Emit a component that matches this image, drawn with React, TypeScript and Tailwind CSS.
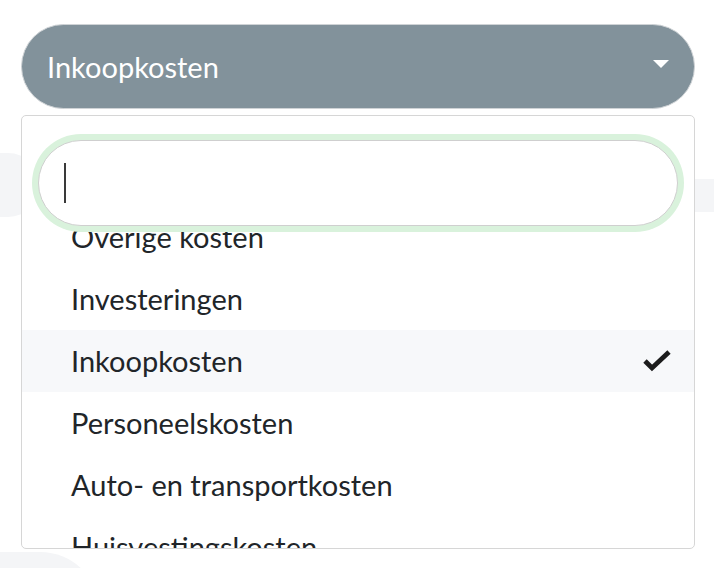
import { useState } from "react";

const options = [
  "Overige kosten",
  "Investeringen",
  "Inkoopkosten",
  "Personeelskosten",
  "Auto- en transportkosten",
  "Huisvestingskosten",
];

/** Select dropdown, opened, with a search field over the option list. */
export default function App() {
  const [selected] = useState("Inkoopkosten");

  return (
    <div
      className="relative h-[568px] w-[714px] overflow-hidden bg-white"
      style={{ fontFamily: "Lato, 'Open Sans', sans-serif" }}
    >
      {/* faint shapes of the page behind the dropdown */}
      <div className="absolute left-[-40px] top-[153px] h-[64px] w-[80px] rounded-[32px] bg-[#f4f5f7]" />
      <div className="absolute right-0 top-[179px] h-[33px] w-[40px] bg-[#f4f5f7]" />
      <div className="absolute left-[-60px] top-[552px] h-[120px] w-[160px] rounded-full bg-[#f4f5f7]" />

      <div className="relative ml-[21px] w-[674px] pt-[24px]">
        <button className="flex h-[85px] w-full items-center justify-between rounded-full border border-[#cfd3d6] bg-[#82929b] pl-[25px] pr-[25px] text-left">
          <span className="text-[29px] leading-none text-white">{selected}</span>
          <svg width="16" height="8" viewBox="0 0 16 8" className="-mt-[5px]">
            <polygon points="0,0 16,0 8,8" fill="#ffffff" />
          </svg>
        </button>

        <div className="relative mt-[6px] h-[434px] overflow-hidden rounded-[5px] border border-[#d6d6d6] bg-white">
          <ul className="pt-[90px]">
            {options.map((opt) => (
              <li
                key={opt}
                className={
                  "flex h-[62px] items-center justify-between pl-[49px] pr-[22px] text-[29px] text-[#212529] " +
                  (opt === selected ? "bg-[#f7f8fa]" : "")
                }
              >
                <span>{opt}</span>
                {opt === selected && (
                  <svg width="30" height="24" viewBox="0 0 30 24">
                    <polyline
                      points="3,12 10,19 27,3"
                      fill="none"
                      stroke="#1c1c1c"
                      strokeWidth="4.8"
                      strokeLinejoin="miter"
                    />
                  </svg>
                )}
              </li>
            ))}
          </ul>

          <div className="absolute left-[16px] right-[16px] top-[24px] flex h-[86px] items-center rounded-full border-[1.5px] border-[#cfcfcf] bg-white pl-[25px] shadow-[0_0_0_6px_#d9f2dc]">
            <span className="h-[40px] w-[2px] bg-[#3a3a3a]" />
          </div>
        </div>
      </div>
    </div>
  );
}
